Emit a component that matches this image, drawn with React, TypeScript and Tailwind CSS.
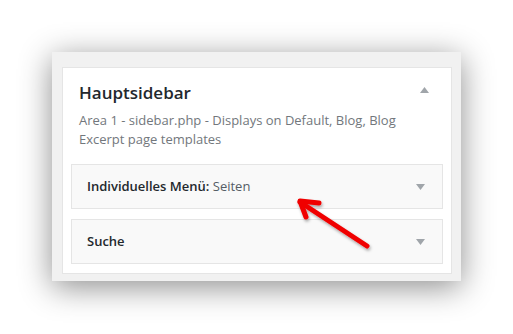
import React from 'react';

const Caret = ({ up = false }: { up?: boolean }) => (
  <svg width="9" height="6" viewBox="0 0 9 6" className="shrink-0">
    <path d={up ? 'M0 6 L4.5 0 L9 6 Z' : 'M0 0 L9 0 L4.5 6 Z'} fill="#a0a5aa" />
  </svg>
);

const WidgetRow = ({ title, sub }: { title: string; sub?: string }) => (
  <div className="flex h-[45px] items-center justify-between border border-[#e5e5e5] bg-[#f9f9f9] pl-[15px] pr-[17px]">
    <span className="text-[13px] font-semibold text-[#23282d]">
      {title}
      {sub && <span className="font-normal text-[#555d66]"> {sub}</span>}
    </span>
    <Caret />
  </div>
);

export default function App() {
  return (
    <div className="relative h-[334px] w-[513px] overflow-hidden bg-white font-['Open_Sans',sans-serif]">
      <div className="pl-[52px] pt-[52px]">
        {/* Widget area panel */}
        <div className="w-[409px] bg-[#f1f1f1] pb-[7px] pl-[10px] pr-[9px] pt-[15px] shadow-[0_6px_30px_rgba(0,0,0,0.45)]">
          <div className="border border-[#e5e5e5] bg-white px-[8px] pb-[9px]">
            <div className="flex items-start justify-between pl-[8px] pr-[14px] pt-[12px]">
              <h2 className="text-[17px] font-semibold leading-[26px] text-[#23282d]">Hauptsidebar</h2>
              <div className="pt-[7px]">
                <Caret up />
              </div>
            </div>
            <p className="mt-[5px] pl-[8px] pr-[40px] text-[13px] leading-[19px] text-[#72777c]">
              Area 1 - sidebar.php - Displays on Default, Blog, Blog Excerpt page templates
            </p>
            <div className="mt-[15px] flex flex-col gap-[10px]">
              <WidgetRow title="Individuelles Menü:" sub="Seiten" />
              <WidgetRow title="Suche" />
            </div>
          </div>
        </div>
      </div>

      {/* Red annotation arrow */}
      <svg className="pointer-events-none absolute left-0 top-0" width="513" height="334" viewBox="0 0 513 334">
        <defs>
          <filter id="sh" x="-20%" y="-20%" width="140%" height="140%">
            <feDropShadow dx="1" dy="2" stdDeviation="1.5" floodColor="#000" floodOpacity="0.35" />
          </filter>
        </defs>
        <g filter="url(#sh)" stroke="#f00000" strokeWidth="5" strokeLinecap="round" strokeLinejoin="round" fill="none">
          <path d="M367 246 L300 202" />
          <path d="M319 203 L300 201 L306 217" />
        </g>
      </svg>
    </div>
  );
}
